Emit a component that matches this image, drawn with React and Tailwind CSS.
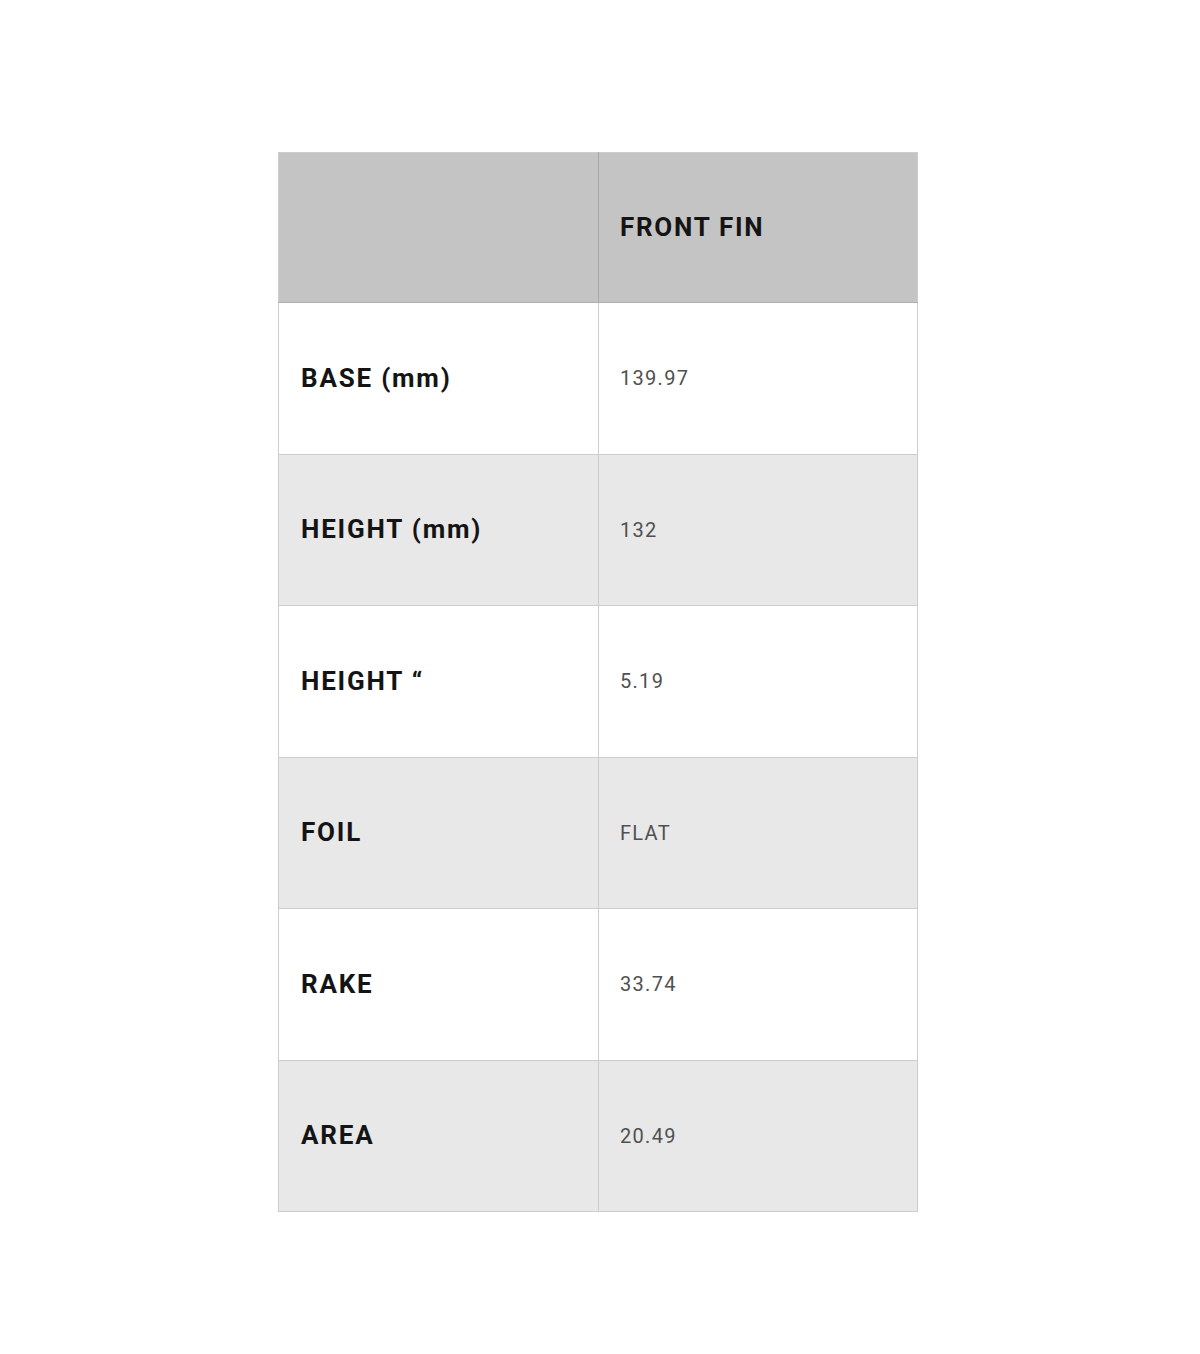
import React from "react";

const rows = [
  { label: "BASE (mm)", value: "139.97" },
  { label: "HEIGHT (mm)", value: "132" },
  { label: "HEIGHT \u201C", value: "5.19" },
  { label: "FOIL", value: "FLAT" },
  { label: "RAKE", value: "33.74" },
  { label: "AREA", value: "20.49" },
];

export default function App() {
  return (
    <div
      className="min-h-[1354px] bg-white flex justify-center pt-[152px] pr-1"
      style={{ fontFamily: "Roboto, 'Liberation Sans', sans-serif" }}
    >
      <table className="w-[640px] border-collapse border border-[#cdcdcd] h-fit">
        <thead>
          <tr className="bg-[#c4c4c4] h-[150px]">
            <th className="w-[320px] border-r border-[#a9a9a9] border-b border-b-[#b0b0b0]"></th>
            <th className="text-left pl-[21px] text-[26px] font-bold tracking-[1.7px] text-[#141414] border-b border-[#b0b0b0]">
              FRONT FIN
            </th>
          </tr>
        </thead>
        <tbody>
          {rows.map((r, i) => (
            <tr
              key={r.label}
              className={
                (i % 2 === 0 ? "bg-white" : "bg-[#e8e8e8]") + " h-[151.5px]"
              }
            >
              <td className="pl-[22px] text-[26px] font-bold tracking-[1.8px] text-[#141414] border-r border-b border-[#cdcdcd] align-middle">
                {r.label}
              </td>
              <td className="pl-[21px] text-[20px] tracking-[1.3px] text-[#505050] border-b border-[#cdcdcd] align-middle">
                {r.value}
              </td>
            </tr>
          ))}
        </tbody>
      </table>
    </div>
  );
}
